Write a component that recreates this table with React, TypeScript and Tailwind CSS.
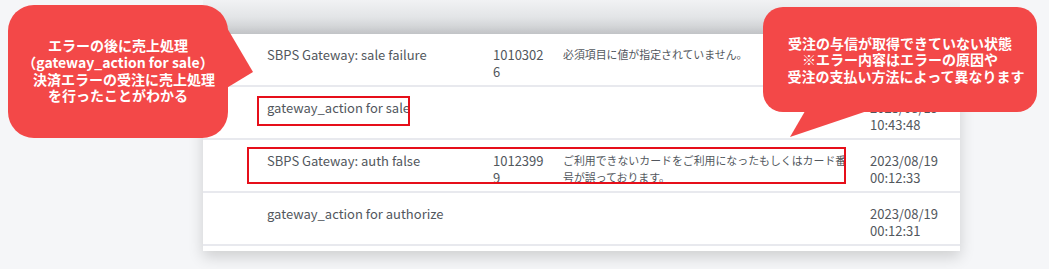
import React from "react";

type Row = {
  title: string;
  code: string[];
  message: string[];
  date: string[];
};

const rows: Row[] = [
  {
    title: "SBPS Gateway: sale failure",
    code: ["1010302", "6"],
    message: ["必須項目に値が指定されていません。"],
    date: [],
  },
  {
    title: "gateway_action for sale",
    code: [],
    message: [],
    date: ["2023/08/19", "10:43:48"],
  },
  {
    title: "SBPS Gateway: auth false",
    code: ["1012399", "9"],
    message: ["ご利用できないカードをご利用になったもしくはカード番", "号が誤っております。"],
    date: ["2023/08/19", "00:12:33"],
  },
  {
    title: "gateway_action for authorize",
    code: [],
    message: [],
    date: ["2023/08/19", "00:12:31"],
  },
];

function Lines({ items, className = "" }: { items: string[]; className?: string }) {
  return (
    <div className={"whitespace-nowrap " + className}>
      {items.map((t) => (
        <div key={t}>{t}</div>
      ))}
    </div>
  );
}

export default function App() {
  return (
    <div className="relative w-[1049px] h-[269px] overflow-hidden bg-[#f5f6f8] font-['Noto_Sans_CJK_JP','Noto_Sans',sans-serif]">
      {/* table card */}
      <div className="ml-[203px] w-[757px]">
        <div className="h-[34px] bg-linear-to-b from-[#f1f2f4] via-[#e3e5e7] to-[#c7c9cc]" />
        <div className="bg-white pb-[5px] shadow-[0_6px_14px_rgba(0,0,0,0.16)] text-[13px] leading-[17px] text-[#52575d]">
          {rows.map((r) => (
            <div
              key={r.title}
              className="grid h-[53px] grid-cols-[64px_226px_70px_307px_1fr] border-b-2 border-[#e8e9ee] pt-[12px]"
            >
              <div />
              <div className="whitespace-nowrap">{r.title}</div>
              <Lines items={r.code} />
              <Lines items={r.message} className="text-[10.9px]" />
              <Lines items={r.date} />
            </div>
          ))}
        </div>
      </div>

      {/* red highlight boxes */}
      <div className="absolute left-[257px] top-[96px] h-[30px] w-[153px] border-2 border-[#e60f1a]" />
      <div className="absolute left-[247px] top-[147px] h-[37px] w-[599px] border-2 border-[#e60f1a]" />

      {/* callout tails */}
      <svg className="pointer-events-none absolute inset-0" width="1049" height="269">
        <polygon points="220,16 253,72 220,92" fill="#f34848" />
        <polygon points="808,106 790,137 882,106" fill="#f34848" />
      </svg>

      {/* left callout */}
      <div className="absolute left-[8px] top-[5px] flex h-[133px] w-[220px] flex-col items-center justify-center rounded-[26px] bg-[#f34848] pb-[2px] text-center text-[14px] font-bold leading-[16.7px] text-white">
        <div>エラーの後に売上処理</div>
        <div>（gateway_action for sale）</div>
        <div className="pl-[12px]">決済エラーの受注に売上処理</div>
        <div>を行ったことがわかる</div>
      </div>

      {/* right callout */}
      <div className="absolute left-[763px] top-[7px] flex h-[105px] w-[274px] flex-col items-center justify-center rounded-[20px] bg-[#f34848] text-center text-[14px] font-bold leading-[16.5px] text-white">
        <div>受注の与信が取得できていない状態</div>
        <div>※エラー内容はエラーの原因や</div>
        <div className="pl-[12px]">受注の支払い方法によって異なります</div>
      </div>
    </div>
  );
}
